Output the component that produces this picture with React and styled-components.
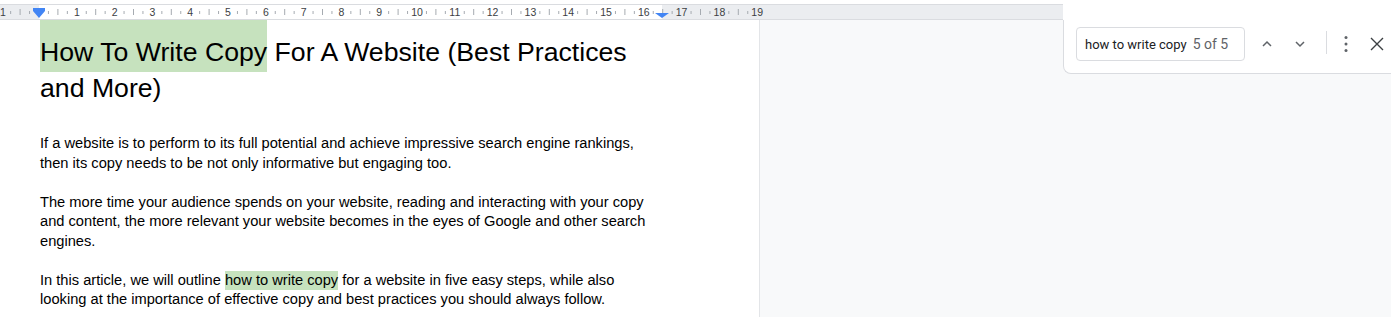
import styled, { createGlobalStyle } from "styled-components";

const GlobalStyle = createGlobalStyle`
  body {
    margin: 0;
    background: #f8f9fa;
    font-family: "Liberation Sans", Arial, sans-serif;
    overflow: hidden;
  }
`;

const CM = 37.8;
const ZERO = 39;
const RIGHT_INDENT = 662;
const RULER_W = 1063;

const Screen = styled.div`
  position: relative;
  width: 1391px;
  height: 317px;
  overflow: hidden;
`;

const RulerRow = styled.div`
  height: 20px;
  background: #fff;
  padding-top: 4px;
  box-sizing: border-box;
`;

const RulerBar = styled.div`
  width: ${RULER_W}px;
  height: 16px;
  box-sizing: border-box;
  border-top: 1px solid #dadce0;
  border-bottom: 1px solid #dadce0;
  background: linear-gradient(
    to right,
    #ebedf0 0 ${ZERO}px,
    #fff ${ZERO}px ${RIGHT_INDENT}px,
    #ebedf0 ${RIGHT_INDENT}px
  );

  svg {
    display: block;
  }
`;

const Canvas = styled.div`
  display: flex;
  height: 297px;
`;

const Page = styled.div`
  width: 760px;
  background: #fff;
  border-right: 1px solid #e3e5e8;
  box-sizing: border-box;
  padding: 14px 0 0 40px;
`;

const Column = styled.div`
  width: 622px;
  color: #000;
`;

const Title = styled.h1`
  margin: 0 0 28px;
  font-size: 26.67px;
  font-weight: 400;
  line-height: 36px;
`;

const Para = styled.p`
  margin: 0 0 19.5px;
  font-size: 14.67px;
  line-height: 19.5px;
`;

const Mark = styled.span`
  background: #c6e2be;
  padding: ${(p) => (p.$big ? "17px 0 5px" : "1px 0 2px")};
`;

const FindPanel = styled.div`
  position: absolute;
  top: 20px;
  right: 0;
  width: 328px;
  height: 54px;
  box-sizing: border-box;
  background: #fff;
  border-left: 1px solid #dadce0;
  border-bottom: 1px solid #dadce0;
  border-bottom-left-radius: 8px;
  display: flex;
  align-items: flex-start;
  padding: 7px 0 0 12px;
  font-family: Roboto, "Liberation Sans", sans-serif;
`;

const SearchBox = styled.div`
  width: 169px;
  height: 34px;
  box-sizing: border-box;
  border: 1px solid #dadce0;
  border-radius: 4px;
  display: flex;
  align-items: center;
  padding-left: 8px;
  gap: 6px;
`;

const Query = styled.span`
  font-size: 13px;
  color: #202124;
`;

const Count = styled.span`
  font-size: 14px;
  color: #5f6368;
`;

const IconButton = styled.button`
  width: ${(p) => p.$w || 33}px;
  height: 34px;
  margin-left: ${(p) => p.$ml || 0}px;
  padding: 0;
  border: 0;
  background: none;
  display: flex;
  align-items: center;
  justify-content: center;
  color: #5f6368;
`;

const Divider = styled.div`
  width: 1px;
  height: 23px;
  margin: 4px 0 0 10px;
  background: #dadce0;
`;

function Ruler() {
  const ticks = [];
  const labels = [];
  for (let n = -1; n <= 19; n++) {
    const x = ZERO + n * CM;
    if (n !== 0) {
      labels.push(
        <text
          key={"l" + n}
          x={x}
          y={11}
          textAnchor="middle"
          fontSize="10.5"
          fontFamily="Liberation Sans, Arial, sans-serif"
          fill="#3c4043"
        >
          {n}
        </text>
      );
    }
    if (n < 19) {
      [0.25, 0.5, 0.75].forEach((f) => {
        const tx = x + f * CM;
        const big = f === 0.5;
        ticks.push(
          <line
            key={"t" + n + f}
            x1={tx}
            x2={tx}
            y1={big ? 4 : 6}
            y2={big ? 10 : 9}
            stroke="#a6abb1"
            strokeWidth="1"
          />
        );
      });
    }
  }
  return (
    <svg width={RULER_W} height="14" viewBox={`0 0 ${RULER_W} 14`}>
      {ticks}
      {labels}
      <rect x={ZERO - 6} y={3} width={12} height={3} fill="#4285f4" />
      <path d={`M${ZERO - 6} 6 H${ZERO + 6} L${ZERO} 13 Z`} fill="#4285f4" />
      <path
        d={`M${RIGHT_INDENT - 7} 8 H${RIGHT_INDENT + 7} L${RIGHT_INDENT} 13 Z`}
        fill="#4285f4"
      />
    </svg>
  );
}

const Chevron = ({ up }) => (
  <svg width="12" height="12" viewBox="0 0 12 12" fill="none">
    <path
      d={up ? "M2 8 L6 4 L10 8" : "M2 4 L6 8 L10 4"}
      stroke="currentColor"
      strokeWidth="1.5"
    />
  </svg>
);

const Dots = () => (
  <svg width="6" height="18" viewBox="0 0 6 18">
    <circle cx="3" cy="2.5" r="1.5" fill="currentColor" />
    <circle cx="3" cy="9" r="1.5" fill="currentColor" />
    <circle cx="3" cy="15.5" r="1.5" fill="currentColor" />
  </svg>
);

const Close = () => (
  <svg width="14" height="14" viewBox="0 0 14 14" fill="none">
    <path d="M1 1 L13 13 M13 1 L1 13" stroke="#3c4043" strokeWidth="1.4" />
  </svg>
);

export default function App() {
  return (
    <Screen>
      <GlobalStyle />
      <RulerRow>
        <RulerBar>
          <Ruler />
        </RulerBar>
      </RulerRow>
      <Canvas>
        <Page>
          <Column>
            <Title>
              <Mark $big>How To Write Copy</Mark> For A Website (Best Practices
              and More)
            </Title>
            <Para>
              If a website is to perform to its full potential and achieve
              impressive search engine rankings, then its copy needs to be not
              only informative but engaging too.
            </Para>
            <Para>
              The more time your audience spends on your website, reading and
              interacting with your copy and content, the more relevant your
              website becomes in the eyes of Google and other search engines.
            </Para>
            <Para>
              In this article, we will outline <Mark>how to write copy</Mark>{" "}
              for a website in five easy steps, while also looking at the
              importance of effective copy and best practices you should always
              follow.
            </Para>
          </Column>
        </Page>
      </Canvas>
      <FindPanel>
        <SearchBox>
          <Query>how to write copy</Query>
          <Count>5 of 5</Count>
        </SearchBox>
        <IconButton $ml={5}>
          <Chevron up />
        </IconButton>
        <IconButton>
          <Chevron />
        </IconButton>
        <Divider />
        <IconButton $w={28} $ml={5}>
          <Dots />
        </IconButton>
        <IconButton $w={28} $ml={3}>
          <Close />
        </IconButton>
      </FindPanel>
    </Screen>
  );
}
